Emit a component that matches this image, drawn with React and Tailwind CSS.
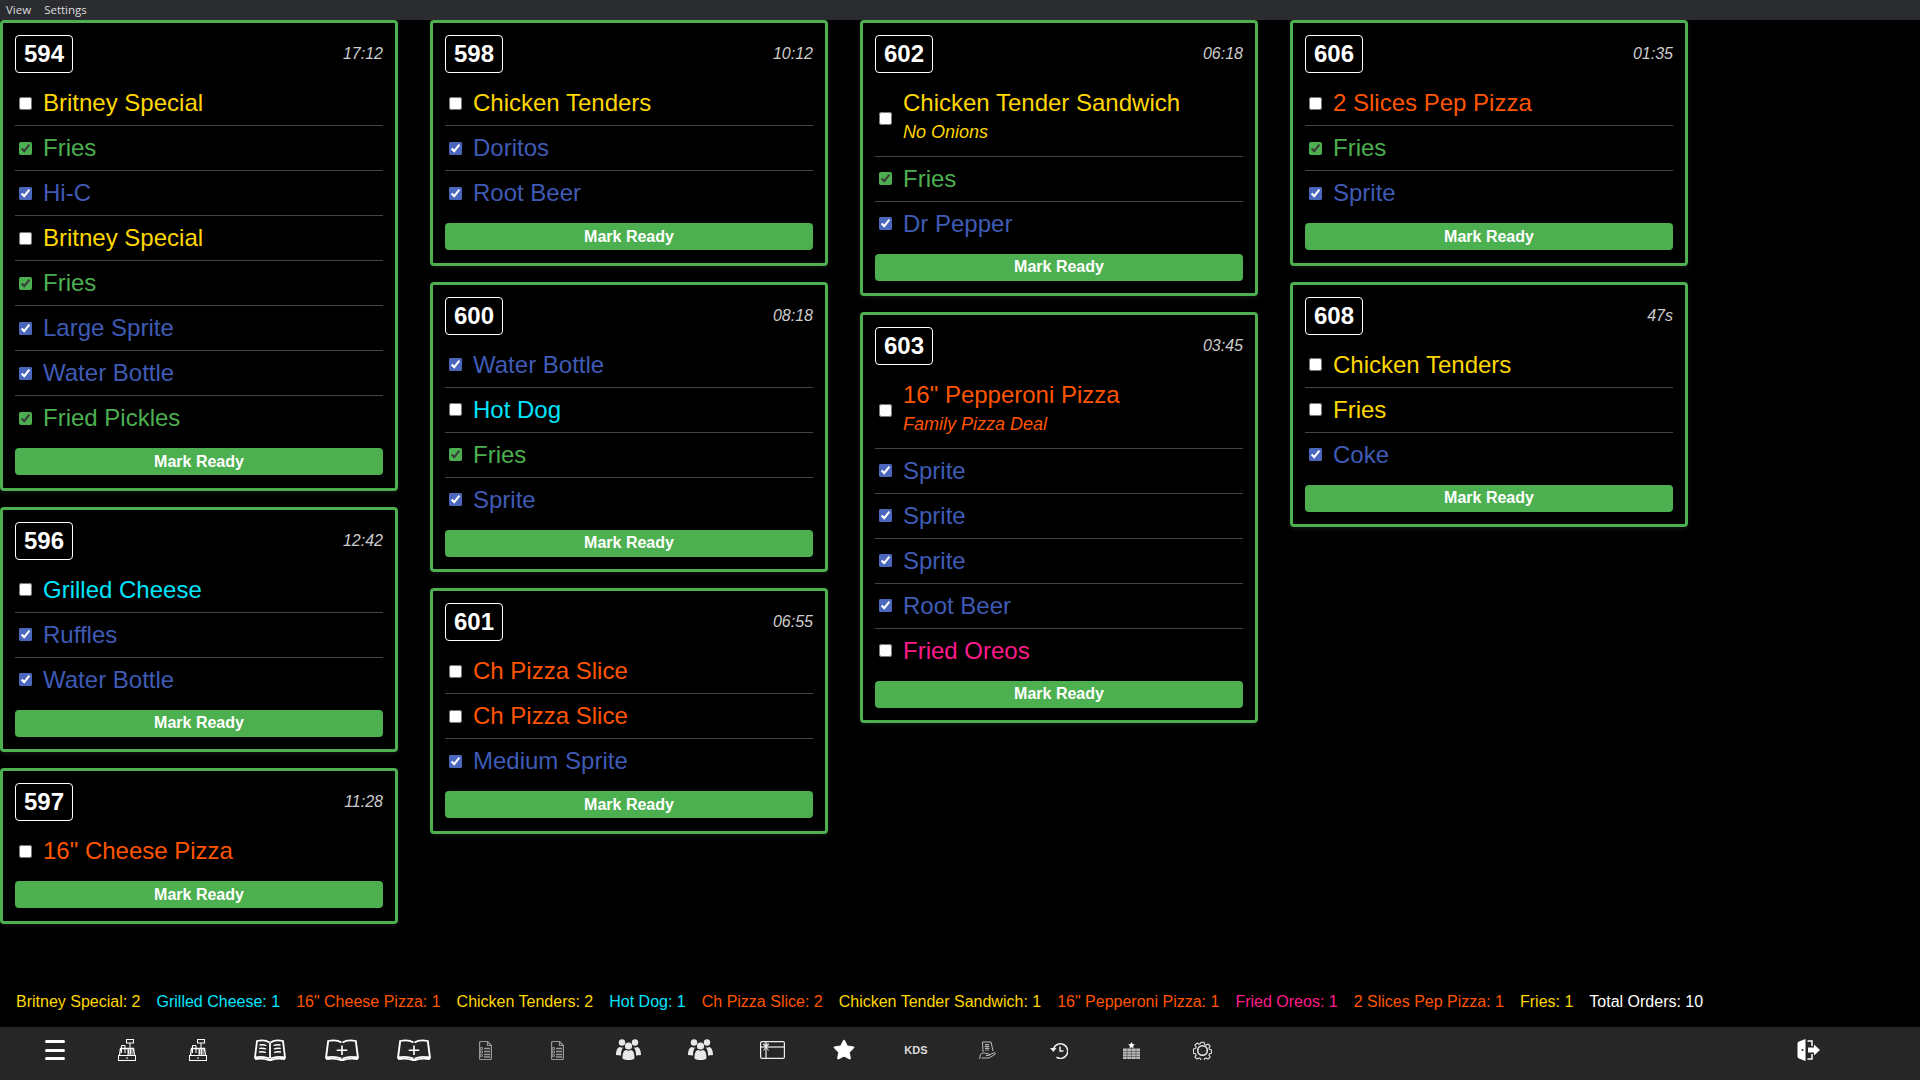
import { Star } from "lucide-react";

const YELLOW = "text-[#ffd700]";
const CYAN = "text-[#00e5ff]";
const ORANGE = "text-[#ff5500]";
const PINK = "text-[#ff1a8c]";
const GREEN = "text-[#4caf50]";
const BLUE = "text-[#3f5bb5]";

const y = (name, note) => ({ name, note, color: YELLOW });
const c = (name) => ({ name, color: CYAN });
const o = (name, note) => ({ name, note, color: ORANGE });
const p = (name) => ({ name, color: PINK });
const g = (name) => ({ name, color: GREEN, check: "green" });
const b = (name) => ({ name, color: BLUE, check: "blue" });

const COLUMNS = [
  [
    { id: 594, time: "17:12", items: [y("Britney Special"), g("Fries"), b("Hi-C"), y("Britney Special"), g("Fries"), b("Large Sprite"), b("Water Bottle"), g("Fried Pickles")] },
    { id: 596, time: "12:42", items: [c("Grilled Cheese"), b("Ruffles"), b("Water Bottle")] },
    { id: 597, time: "11:28", items: [o('16" Cheese Pizza')] },
  ],
  [
    { id: 598, time: "10:12", items: [y("Chicken Tenders"), b("Doritos"), b("Root Beer")] },
    { id: 600, time: "08:18", items: [b("Water Bottle"), c("Hot Dog"), g("Fries"), b("Sprite")] },
    { id: 601, time: "06:55", items: [o("Ch Pizza Slice"), o("Ch Pizza Slice"), b("Medium Sprite")] },
  ],
  [
    { id: 602, time: "06:18", items: [y("Chicken Tender Sandwich", "No Onions"), g("Fries"), b("Dr Pepper")] },
    { id: 603, time: "03:45", items: [o('16" Pepperoni Pizza', "Family Pizza Deal"), b("Sprite"), b("Sprite"), b("Sprite"), b("Root Beer"), p("Fried Oreos")] },
  ],
  [
    { id: 606, time: "01:35", items: [o("2 Slices Pep Pizza"), g("Fries"), b("Sprite")] },
    { id: 608, time: "47s", items: [y("Chicken Tenders"), y("Fries"), b("Coke")] },
  ],
];

const SUMMARY = [
  ["Britney Special: 2", YELLOW],
  ["Grilled Cheese: 1", CYAN],
  ['16" Cheese Pizza: 1', ORANGE],
  ["Chicken Tenders: 2", YELLOW],
  ["Hot Dog: 1", CYAN],
  ["Ch Pizza Slice: 2", ORANGE],
  ["Chicken Tender Sandwich: 1", YELLOW],
  ['16" Pepperoni Pizza: 1', ORANGE],
  ["Fried Oreos: 1", PINK],
  ["2 Slices Pep Pizza: 1", ORANGE],
  ["Fries: 1", YELLOW],
  ["Total Orders: 10", "text-white"],
];

function OrderRow({ item, last }) {
  return (
    <div className={`flex items-center ${last ? "" : "border-b border-[#444]"}`}>
      <input
        type="checkbox"
        readOnly
        checked={!!item.check}
        className={`ml-1 mr-[11px] shrink-0 ${item.check === "green" ? "accent-[#4caf50]" : "accent-[#4a66bd]"}`}
      />
      <div className={item.color}>
        <div className={`text-2xl leading-7 ${item.note ? "pt-2" : "py-2"}`}>{item.name}</div>
        {item.note && <div className="mt-[5px] pb-[12.5px] text-[18px] italic leading-[21px]">{item.note}</div>}
      </div>
    </div>
  );
}

function OrderCard({ order }) {
  return (
    <div className="rounded-[4px] border-[3px] border-[#4caf50] bg-black p-3 pb-[12.5px] shadow-[0_2px_4px_rgba(255,255,255,0.08)]">
      <div className="mb-2 flex items-center justify-between">
        <div className="rounded-[4px] border border-white px-2 text-2xl font-bold leading-9 text-white">{order.id}</div>
        <div className="text-base italic text-[#ccc]">{order.time}</div>
      </div>
      {order.items.map((item, i) => (
        <OrderRow key={i} item={item} last={i === order.items.length - 1} />
      ))}
      <button className="mt-2 block h-[27px] w-full rounded-[4px] bg-[#4caf50] text-base font-bold leading-[22px] text-white">
        Mark Ready
      </button>
    </div>
  );
}

function Register() {
  return (
    <svg width="18" height="22" viewBox="0 0 18 22" fill="none" stroke="#fff" strokeWidth="1">
      <rect x="0.5" y="16.5" width="17" height="5" />
      <path d="M8 19h2" />
      <path d="M1.500 16.500 2.500 9.500h13l1 7" strokeWidth="1.300" />
      <rect x="8.500" y="0.500" width="7" height="3.500" />
      <path d="M12 4v5.500" />
      <path d="M3.500 14V6.500h3.500V14" />
      <path d="M9 11h6M9 13h6M9 15h6M10.500 10.500v5M12.500 10.500v5" strokeWidth="0.900" />
    </svg>
  );
}

function Book({ children, width = 32 }) {
  return (
    <svg width={width} height="22" viewBox="0 0 32 22" fill="none" stroke="#fff" strokeWidth="1.800" preserveAspectRatio="none">
      <path d="M15.500 3.500C12 1 7 1 3 2L1 18.500c5-1 10-.8 14.500 1" />
      <path d="M16.500 3.500C20 1 25 1 29 2l2 16.500c-5-1-10-.8-14.500 1" />
      <path d="M1 20c5-.8 10-.5 13.500 1h3C21 19.500 26 19.200 31 20" strokeWidth="1.800" />
      {children}
    </svg>
  );
}

function OpenBook() {
  return (
    <Book>
      <path d="M16 3.500V19" />
      <path d="M5.500 6c2.500-.5 5-.2 7 .5M5.200 9.500c2.500-.5 5-.2 7 .5M5 13c2.500-.5 5-.2 7 .5" strokeWidth="1.300" />
      <path d="M26.500 6c-2.500-.5-5-.2-7 .5M26.800 9.500c-2.500-.5-5-.2-7 .5M27 13c-2.500-.5-5-.2-7 .5" strokeWidth="1.300" />
    </Book>
  );
}

function BookPlus() {
  return (
    <Book width={34}>
      <path d="M16 6.500v9.500M11 11.200h10" strokeWidth="1.500" />
    </Book>
  );
}

function DocList() {
  return (
    <svg width="13" height="19" viewBox="0 0 13 19" fill="none" stroke="#999" strokeWidth="1.200">
      <path d="M.6 1.500a1 1 0 0 1 1-1h7l3.800 4v13a1 1 0 0 1-1 1h-9.800a1 1 0 0 1-1-1z" />
      <path d="M8.500.5v4h4" />
      <path d="M5 7.500h6M5 10.500h6M5 13.500h6M5 16h6" strokeWidth="1.300" />
      <path d="M1.500 6.500h2v2h-2zM1.500 10h2v2h-2zM1.500 13.500h2v2h-2z" strokeWidth="0.900" />
    </svg>
  );
}

function People() {
  return (
    <svg width="25" height="22" viewBox="0 0 25 22" fill="#e8e8e8">
      <circle cx="6" cy="3.500" r="3.200" />
      <circle cx="19" cy="3.500" r="3.200" />
      <path d="M0 16c0-5 1.500-7.500 4-8 1 .8 2.500.8 3.500.3C5.500 10 5 13 5 16.500z" />
      <path d="M25 16c0-5-1.500-7.500-4-8-1 .8-2.500.8-3.500.3 2 1.700 2.500 4.700 2.500 8.200z" />
      <circle cx="12.500" cy="7" r="3.600" />
      <path d="M6.500 19.500c0-6 1.500-8 3.500-8.500 1.500 1 3.500 1 5 0 2 .5 3.500 2.500 3.500 8.500-3 2-9 2-12 0z" />
    </svg>
  );
}

function GiftCard() {
  return (
    <svg width="25" height="18" viewBox="0 0 25 18" fill="none" stroke="#eee" strokeWidth="1.200">
      <rect x="0.600" y="0.600" width="23.800" height="16.800" rx="1.500" />
      <path d="M1 6h23" />
      <path d="M6 1v16" />
      <path d="M6 6 3 3.200h2.500L6 6l.5-2.800H9zM6 6 3.500 9.500M6 6l2.500 3.500" strokeWidth="1" />
    </svg>
  );
}

function HandCards() {
  return (
    <svg width="17" height="19" viewBox="0 0 17 19" fill="none" stroke="#ccc" strokeWidth="0.900">
      <path d="M4 11 3.500 1h8.500l2 9" />
      <path d="M6 3.500h4M5.500 5.500h5M6 7.500h4.500M7 3v7M9 3v7" strokeWidth="0.700" />
      <path d="M.5 18l1-4.500c1.500-1.500 4-2 5.500-1l3 .5c1 .3.800 1.500-.2 1.500H7" />
      <path d="M10 14l5-2.200c1.300-.3 1.800.8 1 1.500L10 17H2.500" />
    </svg>
  );
}

function ClockBack() {
  return (
    <svg width="18" height="17" viewBox="0 0 18 17" fill="none" stroke="#eee" strokeWidth="1.600">
      <path d="M3.600 6.500A7.300 7.300 0 1 1 6.500 15.300" />
      <path d="M0 6h6.500L3.300 10z" fill="#eee" stroke="none" />
      <path d="M10 4.500v4.500h3.500" strokeWidth="1.500" />
    </svg>
  );
}

function TableStar() {
  return (
    <svg width="17" height="17" viewBox="0 0 17 17" fill="none">
      <path d="M8.500 0l1 2.100 2.300.3-1.700 1.600.4 2.300-2-1.100-2 1.100.4-2.300-1.700-1.600 2.300-.3z" fill="#fff" />
      <rect x="0" y="6.500" width="17" height="10.500" fill="#bbb" />
      <path d="M0 9.500h17M0 12h17M0 14.500h17M4 6.500V17M8.500 6.500V17M13 6.500V17" stroke="#555" strokeWidth="0.700" />
    </svg>
  );
}

function Gear() {
  return (
    <svg width="19" height="19" viewBox="0 0 19 19" fill="none" stroke="#eee" strokeWidth="1.100">
      <path d="M7.800.8h3.400l.5 2.300 1.600.7 2-1.300 2.300 2.300-1.300 2 .7 1.600 2.200.5v3.400l-2.200.5-.7 1.600 1.300 2-2.300 2.300-2-1.300-1.600.7-.5 2.200H7.800l-.5-2.200-1.600-.7-2 1.300-2.300-2.300 1.300-2-.7-1.600-2.200-.5V7.900l2.200-.5.7-1.600-1.300-2 2.300-2.300 2 1.300 1.600-.7z" strokeLinejoin="round" transform="translate(.6 .6) scale(.94)" />
      <circle cx="9.500" cy="9.500" r="4.800" strokeWidth="1.500" />
    </svg>
  );
}

function ExitDoor() {
  return (
    <svg width="23" height="22" viewBox="0 0 23 22" fill="none">
      <path d="M8.500 0v22L2 19.500a2 2 0 0 1-1.500-2V4.500A2 2 0 0 1 2 2.500z" fill="#fff" />
      <circle cx="5.500" cy="11" r="1" fill="#262626" />
      <path d="M10.500 2h4.500v5M10.500 20h4.500v-5" stroke="#fff" strokeWidth="1.500" />
      <path d="M11 8.500h6V5.500L23 11l-6 5.500v-3h-6z" fill="#fff" />
    </svg>
  );
}

const TOOLBAR = [
  <div key="menu" className="flex w-5 flex-col gap-[5.500px]">
    <div className="h-[3px] rounded-full bg-white" />
    <div className="h-[3px] rounded-full bg-white" />
    <div className="h-[3px] rounded-full bg-white" />
  </div>,
  <Register key="r1" />,
  <Register key="r2" />,
  <OpenBook key="b1" />,
  <BookPlus key="b2" />,
  <BookPlus key="b3" />,
  <DocList key="d1" />,
  <DocList key="d2" />,
  <People key="p1" />,
  <People key="p2" />,
  <GiftCard key="gift" />,
  <Star key="star" size={24} fill="#fff" stroke="#fff" strokeWidth={1} />,
  <span key="kds" className="text-[11px] font-bold text-[#ddd]">KDS</span>,
  <HandCards key="hand" />,
  <ClockBack key="history" />,
  <TableStar key="table" />,
  <Gear key="gear" />,
];

export default function App() {
  return (
    <div className="flex h-screen flex-col overflow-hidden bg-black font-['Liberation_Sans',Arial,sans-serif]">
      <div className="flex h-5 shrink-0 items-center gap-[13px] bg-[#2b2c30] pl-[6px] font-['Open_Sans',sans-serif] text-[11.5px] text-[#ddd]">
        <span>View</span>
        <span>Settings</span>
      </div>

      <div className="flex flex-1 items-start gap-8">
        {COLUMNS.map((col, i) => (
          <div key={i} className="flex w-[398px] flex-col gap-4">
            {col.map((order) => (
              <OrderCard key={order.id} order={order} />
            ))}
          </div>
        ))}
      </div>

      <div className="flex gap-4 pb-4 pl-4 text-base leading-[18px]">
        {SUMMARY.map(([label, color]) => (
          <span key={label} className={color}>{label}</span>
        ))}
      </div>

      <div className="flex h-[53px] shrink-0 items-center bg-[#262626] pb-[7px] pl-[19px] pr-[100px]">
        {TOOLBAR.map((icon) => (
          <div key={icon.key} className="flex w-[71.750px] items-center justify-center">{icon}</div>
        ))}
        <div className="ml-auto">
          <ExitDoor />
        </div>
      </div>
    </div>
  );
}
